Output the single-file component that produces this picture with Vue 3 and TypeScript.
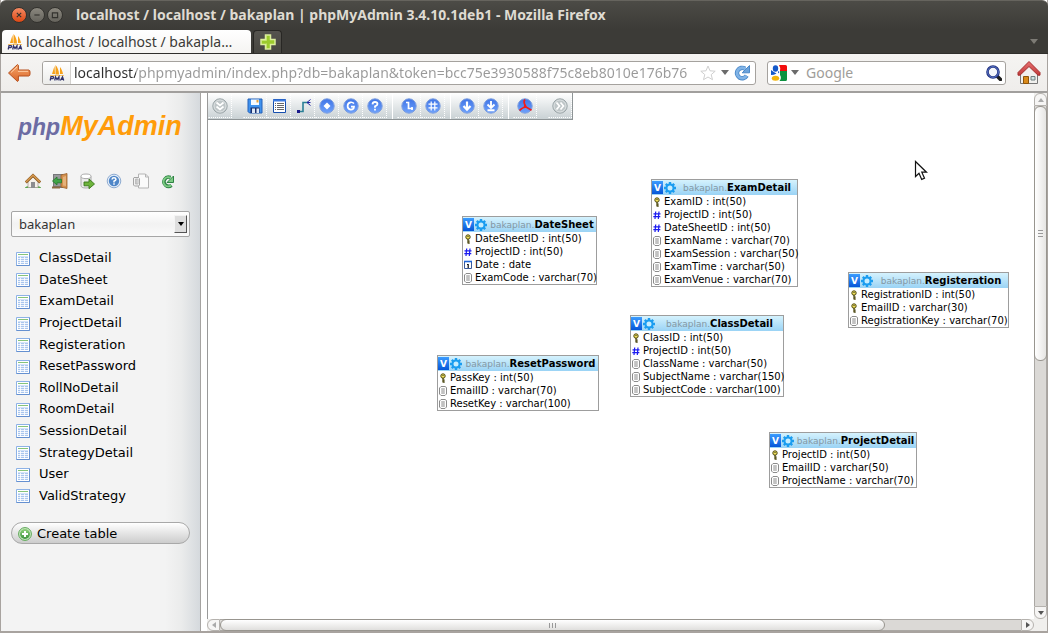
<script setup lang="ts">
import { ref } from 'vue'

type FieldKind = 'key' | 'num' | 'date' | 'text'

interface Field {
  kind: FieldKind
  label: string
}

interface TableNode {
  name: string
  x: number
  y: number
  width: number
  fields: Field[]
}

const f = (kind: FieldKind, label: string): Field => ({ kind, label })

const address = ref('localhost/phpmyadmin/index.php?db=bakaplan&token=bcc75e3930588f75c8eb8010e176b76')
const query = ref('')
const database = ref('bakaplan')

const quickLinks = [
  { icon: 'house', label: 'Home' },
  { icon: 'door', label: 'Log out' },
  { icon: 'sql', label: 'Query window' },
  { icon: 'help', label: 'phpMyAdmin documentation' },
  { icon: 'docs', label: 'Documentation' },
  { icon: 'reload', label: 'Reload navigation frame' },
]

const tables = [
  'ClassDetail', 'DateSheet', 'ExamDetail', 'ProjectDetail', 'Registeration', 'ResetPassword',
  'RollNoDetail', 'RoomDetail', 'SessionDetail', 'StrategyDetail', 'User', 'ValidStrategy',
]

const toolGroups = [
  [{ icon: 't-collapse', label: 'Show/Hide left menu' }],
  [
    { icon: 't-save', label: 'Save position' },
    { icon: 't-list', label: 'Create table' },
    { icon: 't-relation', label: 'Create relation' },
    { icon: 't-display', label: 'Choose column to display' },
    { icon: 't-reload', label: 'Reload' },
    { icon: 't-help', label: 'Help' },
  ],
  [
    { icon: 't-angular', label: 'Angular links' },
    { icon: 't-grid', label: 'Snap to grid' },
  ],
  [
    { icon: 't-small', label: 'Small/Big All' },
    { icon: 't-toggle', label: 'Toggle small/big' },
  ],
  [{ icon: 't-pdf', label: 'Import/Export coordinates for PDF schema' }],
  [{ icon: 't-move', label: 'Move Menu' }],
]

const nodes: TableNode[] = [
  {
    name: 'DateSheet', x: 254, y: 123, width: 135,
    fields: [f('key', 'DateSheetID : int(50)'), f('num', 'ProjectID : int(50)'), f('date', 'Date : date'), f('text', 'ExamCode : varchar(70)')],
  },
  {
    name: 'ExamDetail', x: 443, y: 86, width: 147,
    fields: [
      f('key', 'ExamID : int(50)'), f('num', 'ProjectID : int(50)'), f('num', 'DateSheetID : int(50)'),
      f('text', 'ExamName : varchar(70)'), f('text', 'ExamSession : varchar(50)'),
      f('text', 'ExamTime : varchar(50)'), f('text', 'ExamVenue : varchar(70)'),
    ],
  },
  {
    name: 'Registeration', x: 640, y: 179, width: 161,
    fields: [f('key', 'RegistrationID : int(50)'), f('key', 'EmailID : varchar(30)'), f('text', 'RegistrationKey : varchar(70)')],
  },
  {
    name: 'ClassDetail', x: 422, y: 222, width: 154,
    fields: [
      f('key', 'ClassID : int(50)'), f('num', 'ProjectID : int(50)'), f('text', 'ClassName : varchar(50)'),
      f('text', 'SubjectName : varchar(150)'), f('text', 'SubjectCode : varchar(100)'),
    ],
  },
  {
    name: 'ResetPassword', x: 229, y: 262, width: 162,
    fields: [f('key', 'PassKey : int(50)'), f('text', 'EmailID : varchar(70)'), f('text', 'ResetKey : varchar(100)')],
  },
  {
    name: 'ProjectDetail', x: 561, y: 339, width: 148,
    fields: [f('key', 'ProjectID : int(50)'), f('text', 'EmailID : varchar(50)'), f('text', 'ProjectName : varchar(70)')],
  },
]
</script>

<template>
  <svg class="sprite" aria-hidden="true">
    <defs>
      <linearGradient id="g-blue" x1="0" y1="0" x2="0" y2="1">
        <stop offset="0" stop-color="#3f74e6" /><stop offset="1" stop-color="#6fa2fb" />
      </linearGradient>
      <linearGradient id="g-orange" x1="0" y1="0" x2="0" y2="1">
        <stop offset="0" stop-color="#f6a76a" /><stop offset="1" stop-color="#d9652a" />
      </linearGradient>
      <linearGradient id="g-roof" x1="0" y1="0" x2="0" y2="1">
        <stop offset="0" stop-color="#e87070" /><stop offset="1" stop-color="#c03a3a" />
      </linearGradient>
      <linearGradient id="g-green" x1="0" y1="0" x2="0" y2="1">
        <stop offset="0" stop-color="#8fd07a" /><stop offset="1" stop-color="#3f9440" />
      </linearGradient>
    </defs>

    <symbol id="pma" viewBox="0 0 16 16">
      <path d="M5.500 1 3 9h3zM6.500 0v9.500h3.500C10 6 8.500 2 6.500 0zM11 2v7h3C13.500 6 12.500 4 11 2z" fill="#f7a11a" />
      <path d="M1 10.500h14" stroke="#f9c66a" stroke-width="1" />
      <g fill="none" stroke="#33346b" stroke-width="1.300">
        <path d="M1.200 15.500 2 11.600h2.200q1 1-.5 2H1.800" />
        <path d="M5.700 15.500 6.500 11.800 8 14.500 10 11.800 10 15.500" />
        <path d="M11.400 15.500 13.500 11.800 14.700 15.500M12 14.300h2.500" />
      </g>
    </symbol>
    <symbol id="back" viewBox="0 0 24 20">
      <path d="M10.500 1.500 1.500 10l9 8.500.9-.8V13h10.300q1.300-.2 1.300-2V9q0-1.800-1.300-2H11.400V2.300z" fill="url(#g-orange)" stroke="#b6511f" stroke-linejoin="round" />
      <path d="M10 4 4 9.500M11 8.300h10" stroke="#ffd0a8" fill="none" />
    </symbol>
    <symbol id="plus" viewBox="0 0 16 16">
      <path d="M5.500 1h5v4.500H15v5h-4.500V15h-5v-4.500H1v-5h4.500z" fill="#9ccb2d" stroke="#dcee9c" stroke-width="1.500" />
      <path d="M6.500 2v4.500H2M6.500 9.500V14" stroke="#c5e56e" fill="none" />
    </symbol>
    <symbol id="star" viewBox="0 0 16 16">
      <path d="m8 1 2 4.800 5.200.4-4 3.400 1.300 5.100L8 12l-4.500 2.700 1.300-5.100-4-3.400L6 5.800z" fill="#fff" stroke="#cfcfcf" stroke-linejoin="round" />
    </symbol>
    <symbol id="refresh" viewBox="0 0 16 16">
      <path d="M12.700 10.700A5.200 5.200 0 1 1 11 3.700" fill="none" stroke="#4a88c8" stroke-width="4.400" />
      <path d="M15.500 .5v7.300H8.200z" fill="#6ba3dc" stroke="#4a88c8" />
      <path d="M12.500 10.800A5.200 5.200 0 1 1 11.500 4" fill="none" stroke="#80b3e6" stroke-width="2.800" />
    </symbol>
    <symbol id="google" viewBox="0 0 16 16">
      <path d="M8 0h6.500Q16 0 16 1.500V6H9q1-3-1-6z" fill="#f20d0d" />
      <path d="M9 6h7v8.500q0 1.500-1.500 1.500H8.500q2.500-3 .5-6z" fill="#0d9240" />
      <ellipse cx="4.500" cy="3.500" rx="2.700" ry="3.300" fill="#1559c9" />
      <path d="M0 5q3 2 5.500 3.500Q3 10 0 10zM7 6l1.500 1L7 8.500z" fill="#1559c9" />
      <ellipse cx="4.500" cy="13.300" rx="3.700" ry="2.500" fill="#f3b50c" />
    </symbol>
    <symbol id="lens" viewBox="0 0 16 16">
      <path d="m11 11 3.500 3.500" stroke="#1c1c1c" stroke-width="3.600" stroke-linecap="round" />
      <circle cx="7" cy="7" r="5.500" fill="#f4f6fb" stroke="#1f2f7d" stroke-width="2.600" />
      <circle cx="7" cy="7" r="5.400" fill="none" stroke="#5a76c8" stroke-width="1" />
    </symbol>
    <symbol id="home" viewBox="0 0 24 24">
      <path d="M3.500 11 12 3l8.500 8v11.500h-17z" fill="#f1f0ee" stroke="#777" />
      <path d="m1 11.500 11-11 11 11v2.700h-2L12 5.500 3 14.200H1z" fill="url(#g-roof)" stroke="#a52f2f" stroke-linejoin="round" />
      <path d="M6.500 15.500h5v7h-5z" fill="#d98a1a" stroke="#8e5409" />
      <path d="M14 15.500h4V19h-4z" fill="#cfe3e3" stroke="#6f7f7f" />
    </symbol>
    <symbol id="house" viewBox="0 0 16 16">
      <path d="M0 14.500q2-2 4-1.500h8q2-.5 4 1.500v.5H0z" fill="#58a84a" />
      <path d="M3 8 8 3.500 13 8v6.500H3z" fill="#f5f1ea" stroke="#a8a098" stroke-width=".8" />
      <path d="M.8 9.500 8 2.500l7.200 7" fill="none" stroke="#8d5a20" stroke-width="2.800" />
      <path d="M1 9 8 2.300 15 9" fill="none" stroke="#d79a50" stroke-width="1.500" />
      <path d="M6 9h4v6H6z" fill="#8c8c90" />
    </symbol>
    <symbol id="door" viewBox="0 0 16 16">
      <path d="M1 1h10v14H1z" fill="#77777a" /><path d="M2 2h8v11H2z" fill="#99999c" />
      <path d="m9 2 6-1.500v15L9 14z" fill="#d3904e" stroke="#9a6028" stroke-width=".8" />
      <path d="m11 4 3-1v10l-3-.5z" fill="#e6b27a" />
      <path d="M.5 8 5 4v2.300h4.500v3.500H5V12z" fill="#41a447" stroke="#237a2c" stroke-width=".8" />
      <path d="M0 13.500h8v2H0z" fill="#8b6a42" />
    </symbol>
    <symbol id="sql" viewBox="0 0 16 16">
      <path d="M2 3.500v9q0 2.500 5 2.500t5-2.500v-9z" fill="#ececec" stroke="#a3a3a3" stroke-width=".9" />
      <ellipse cx="7" cy="3.300" rx="5" ry="2.300" fill="#fff" stroke="#a3a3a3" stroke-width=".9" />
      <path d="M5 9h5V6l5.500 5L10 15.700v-2.900H5z" fill="#6db33b" stroke="#38771a" stroke-width=".9" />
    </symbol>
    <symbol id="help" viewBox="0 0 16 16">
      <circle cx="8" cy="8" r="6.800" fill="#e4edf8" stroke="#8eabd0" />
      <circle cx="8" cy="8" r="5.200" fill="#4e86c8" />
      <path d="M6 6.500Q6.200 4.700 8 4.700t2 1.600Q10 7.300 8 8.200V9.400M8 10.300v1.500" fill="none" stroke="#fff" stroke-width="1.500" />
    </symbol>
    <symbol id="docs" viewBox="0 0 16 16">
      <path d="M5.500 1h7l3 3v11h-10z" fill="#fafafa" stroke="#b4b4b4" /><path d="M12.500 1v3h3" fill="none" stroke="#b4b4b4" />
      <path d="M1 4.500h4.500l1 1V12l-1 1H1.500L.5 12V5z" fill="#f2f2f2" stroke="#a5a5a5" />
      <path d="M2.500 6h2.500v5H2.500zM3.700 6v5" fill="none" stroke="#b0b0b0" stroke-width=".8" />
    </symbol>
    <symbol id="reload" viewBox="0 0 16 16">
      <path d="M11.500 12.300A4.600 4.600 0 1 1 10.500 4.500" fill="none" stroke="#2f8244" stroke-width="3.600" />
      <path d="M13.500 3v6.500H7z" fill="#7ccb83" stroke="#2f8244" />
      <path d="M11.200 12.200A4.600 4.600 0 1 1 10.800 5" fill="none" stroke="#7ccb83" stroke-width="1.900" />
    </symbol>
    <symbol id="table" viewBox="0 0 14 14">
      <path d="M.5 .5h13v13H.5z" fill="#fff" stroke="#8db2e6" />
      <path d="M.5 13.500h13V.5" fill="none" stroke="#6590d0" />
      <path d="M2 2.500h10" stroke="#86c47a" />
      <path d="M2 4.500h10v7.500H2z" fill="#a9c6ee" />
      <path d="M4.500 5v7M8.500 5v7M2 6.500h10M2 8.500h10M2 10.500h10" stroke="#fff" stroke-width=".8" />
    </symbol>
    <symbol id="create" viewBox="0 0 14 14">
      <circle cx="7" cy="7" r="6.400" fill="#cdeac6" stroke="#5aa653" />
      <circle cx="7" cy="7" r="5" fill="url(#g-green)" />
      <path d="M7 4v6M4 7h6" stroke="#fff" stroke-width="2" />
    </symbol>

    <symbol id="disc" viewBox="0 0 16 16">
      <circle cx="8" cy="8" r="7.200" fill="url(#g-blue)" stroke="#7d9ede" />
    </symbol>
    <symbol id="gray-disc" viewBox="0 0 16 16">
      <circle cx="8" cy="8" r="7.200" fill="#bfc6c8" stroke="#9ba5a8" /><circle cx="8" cy="8" r="6" fill="none" stroke="#dde2e3" />
    </symbol>
    <symbol id="t-collapse" viewBox="0 0 16 16">
      <use href="#gray-disc" /><path d="m4.500 4.500 3.500 3 3.500-3M4.500 8.500l3.500 3 3.500-3" fill="none" stroke="#fff" stroke-width="1.700" />
    </symbol>
    <symbol id="t-move" viewBox="0 0 16 16">
      <use href="#gray-disc" /><path d="m4.500 4.500 3 3.500-3 3.500M8.500 4.500l3 3.500-3 3.500" fill="none" stroke="#fff" stroke-width="1.700" />
    </symbol>
    <symbol id="t-save" viewBox="0 0 16 16">
      <path d="M1 1h14v14H2.500L1 13.500z" fill="#3f92ee" stroke="#2560b8" />
      <path d="M4 1.500h8V7H4z" fill="#f5f9ff" /><path d="M9.500 2h2v2.500h-2z" fill="#e8a33a" />
      <path d="M3.500 9.500h9V15h-9z" fill="#1a2f6c" /><path d="M5 10.500h3V15H5zM9.500 10.500H12V15H9.500z" fill="#dfe9f6" />
    </symbol>
    <symbol id="t-list" viewBox="0 0 16 16">
      <path d="M2.500 1.500h12v13h-12z" fill="#fff" stroke="#164fae" /><path d="M2 2.500h13" stroke="#3d7be0" stroke-width="2" />
      <path d="M6 5.500h7M6 7.500h7M6 9.500h7M6 11.500h7M4 5.500h1M4 7.500h1M4 9.500h1M4 11.500h1" stroke="#555" stroke-width=".9" />
    </symbol>
    <symbol id="t-relation" viewBox="0 0 16 16">
      <path d="M3 13.500h5v-9h5" fill="none" stroke="#2a7f96" stroke-width="1.600" />
      <path d="M2 12h3v3H2z" fill="#1a1a8a" /><path d="M15.500 1.500 12 4.500l3.500 3M12 4.500h3.500" fill="none" stroke="#2020a0" />
    </symbol>
    <symbol id="t-display" viewBox="0 0 16 16"><use href="#disc" /><path d="m8 4.500 3.500 3.500L8 11.500 4.500 8z" fill="#fff" /></symbol>
    <symbol id="t-reload" viewBox="0 0 16 16">
      <use href="#disc" /><path d="M11 5.500Q9.500 4 7.500 4.300 4.600 5 4.600 8t3 3.600q3.200.2 3.400-3H8" fill="none" stroke="#fff" stroke-width="1.700" />
    </symbol>
    <symbol id="t-help" viewBox="0 0 16 16">
      <use href="#disc" /><path d="M5.500 6.300Q5.700 4 8 4t2.500 2Q10.500 7.300 8 8.300V9.800M8 10.800v1.700" fill="none" stroke="#fff" stroke-width="1.800" />
    </symbol>
    <symbol id="t-angular" viewBox="0 0 16 16"><use href="#disc" /><path d="M5 4.500h2.500v6H12M11 9v3" fill="none" stroke="#fff" stroke-width="1.700" /></symbol>
    <symbol id="t-grid" viewBox="0 0 16 16"><use href="#disc" /><path d="M6.200 3.500v9M9.800 3.500v9M3.500 6.200h9M3.500 9.800h9" stroke="#fff" stroke-width="1.200" /></symbol>
    <symbol id="t-small" viewBox="0 0 16 16"><use href="#disc" /><path d="M8 3.500v8M4.500 8 8 11.700 11.500 8" fill="none" stroke="#fff" stroke-width="2.200" /></symbol>
    <symbol id="t-toggle" viewBox="0 0 16 16">
      <use href="#disc" /><path d="M8 3v7M4.500 6.500 8 10l3.500-3.500M4.500 12.300h7" fill="none" stroke="#fff" stroke-width="1.900" />
    </symbol>
    <symbol id="t-pdf" viewBox="0 0 16 16">
      <use href="#disc" /><path d="M8 1.500Q6.500 3 7.500 6L9 9 14.500 12.300M9 9q-3 0-6.500 3.500M8 6.500 7.500 9.500" fill="none" stroke="#f21b1b" stroke-width="1.700" />
    </symbol>

    <symbol id="gear" viewBox="0 0 12 12">
      <path d="M6 0v12M0 6h12M1.800 1.800l8.400 8.400M10.200 1.800 1.800 10.200" stroke="#1b9df0" stroke-width="2.400" />
      <circle cx="6" cy="6" r="3.500" fill="#c6edff" stroke="#1b9df0" stroke-width="2" />
    </symbol>
    <symbol id="f-key" viewBox="0 0 10 10">
      <circle cx="5" cy="3" r="2.200" fill="#f2e25a" stroke="#4c4710" /><path d="M5 5v4.500M5 7.200h1.700M5 9h1.700" stroke="#4c4710" stroke-width="1.300" />
      <path d="M4.500 2.500h1" stroke="#222" />
    </symbol>
    <symbol id="f-num" viewBox="0 0 10 10"><path d="M3.700 1.500 3 9M7 1.500 6.300 9M1.500 3.800h7M1.300 6.700h7" stroke="#1c1cf0" stroke-width="1.200" /></symbol>
    <symbol id="f-date" viewBox="0 0 10 10">
      <path d="M1.500 1.500h7v7h-7z" fill="#fff" stroke="#3a5a9a" /><path d="M1 1.500h8" stroke="#1f66d8" stroke-width="1.600" /><path d="M4 4.500h1.200V8" fill="none" stroke="#111" stroke-width="1.200" />
    </symbol>
    <symbol id="f-text" viewBox="0 0 10 10">
      <path d="M3 .5h4l1.500 1V8L7 9.500H3L1.500 8V2z" fill="#fff" stroke="#8c8c8c" /><path d="M3.200 3h3.600M3.200 5h3.600M3.200 7h3.600" stroke="#777" stroke-width=".9" />
    </symbol>
  </svg>

  <div class="window">
    <header class="chrome">
      <div class="titlebar">
        <button class="win close" aria-label="Close"><svg viewBox="0 0 16 16"><path d="m5.500 5.500 5 5M10.500 5.500l-5 5" /></svg></button>
        <button class="win" aria-label="Minimize"><svg viewBox="0 0 16 16"><path d="M5 8h6" /></svg></button>
        <button class="win" aria-label="Maximize"><svg viewBox="0 0 16 16"><path d="M5 5.500h6v5.500H5z" /></svg></button>
        <h1>localhost / localhost / bakaplan | phpMyAdmin 3.4.10.1deb1 - Mozilla Firefox</h1>
      </div>
      <div class="tabs">
        <button class="tab"><svg class="i16"><use href="#pma" /></svg><span>localhost / localhost / bakapla…</span></button>
        <button class="newtab" aria-label="New tab"><svg class="i16"><use href="#plus" /></svg></button>
        <button class="alltabs" aria-label="List all tabs"><i class="caret"></i></button>
      </div>
    </header>

    <nav class="navbar">
      <button class="plain" aria-label="Back"><svg class="back"><use href="#back" /></svg></button>
      <div class="box address">
        <span class="identity"><svg class="i16"><use href="#pma" /></svg></span>
        <input v-model="address" type="text" class="url" aria-label="Address">
        <button class="plain" aria-label="Bookmark"><svg class="i16"><use href="#star" /></svg></button>
        <button class="plain" aria-label="History"><i class="caret"></i></button>
        <button class="plain" aria-label="Reload"><svg class="i16"><use href="#refresh" /></svg></button>
      </div>
      <div class="box search">
        <button class="plain engine" aria-label="Search engine"><svg class="i16"><use href="#google" /></svg><i class="caret"></i></button>
        <input v-model="query" type="text" placeholder="Google" aria-label="Search">
        <button class="plain" aria-label="Search"><svg class="i16"><use href="#lens" /></svg></button>
      </div>
      <button class="plain" aria-label="Home page"><svg class="home"><use href="#home" /></svg></button>
    </nav>

    <main class="page">
      <aside class="sidebar">
        <a href="#" class="logo"><span>php</span>MyAdmin</a>
        <div class="quick">
          <a v-for="q in quickLinks" :key="q.icon" href="#" :aria-label="q.label"><svg class="i16"><use :href="'#' + q.icon" /></svg></a>
        </div>
        <div class="picker">
          <select v-model="database" aria-label="Database"><option>bakaplan</option></select>
          <span class="drop" aria-hidden="true"><i></i></span>
        </div>
        <ul class="tables">
          <li v-for="t in tables" :key="t"><a href="#"><svg><use href="#table" /></svg>{{ t }}</a></li>
        </ul>
        <button class="create"><svg><use href="#create" /></svg>Create table</button>
      </aside>

      <section class="designer">
        <div class="canvas">
          <div class="toolbar">
            <div v-for="(g, gi) in toolGroups" :key="gi" class="group">
              <button v-for="t in g" :key="t.icon" :aria-label="t.label"><svg class="i16"><use :href="'#' + t.icon" /></svg></button>
            </div>
          </div>
          <article v-for="n in nodes" :key="n.name" class="node" :style="{ left: n.x + 'px', top: n.y + 'px', width: n.width + 'px' }">
            <h2>
              <button class="toggle" :aria-label="'Collapse ' + n.name">v</button>
              <svg class="gear"><use href="#gear" /></svg>
              <span class="name"><small>bakaplan.</small>{{ n.name }}</span>
            </h2>
            <ul>
              <li v-for="field in n.fields" :key="field.label"><svg><use :href="'#f-' + field.kind" /></svg>{{ field.label }}</li>
            </ul>
          </article>
          <svg class="pointer" viewBox="0 0 14 21"><path d="M1.500 1.500v15l3.500-3.300 2.700 6.200 2.800-1.200-2.700-6h4.700z" fill="#fff" stroke="#111" stroke-width="1.200" /></svg>
        </div>
        <div class="bar vertical">
          <span class="end up"><i class="faint"></i></span>
          <div class="track"><div class="thumb"><b></b></div></div>
          <span class="end down"><i></i></span>
        </div>
        <div class="bar horizontal">
          <span class="end left"><i class="faint"></i></span>
          <div class="track"><div class="thumb"><b></b></div></div>
          <span class="end right"><i></i></span>
        </div>
      </section>
    </main>
  </div>
</template>

<style>
body { margin: 0; background: #fff; }
</style>

<style scoped>
* { box-sizing: border-box; }
button, input, select { font: inherit; color: inherit; margin: 0; padding: 0; border: 0; background: none; }
button { display: flex; align-items: center; flex: none; }
a { color: inherit; text-decoration: none; }
ul { list-style: none; margin: 0; padding: 0; }
svg { display: block; flex: none; }
.sprite { position: absolute; width: 0; height: 0; }
.i16 { width: 16px; height: 16px; }

.window {
  min-height: 100vh;
  display: flex;
  flex-direction: column;
  border: 1px solid #a8a39f;
  border-top: 0;
  border-bottom-width: 2px;
  font-family: "DejaVu Sans", sans-serif;
  background: #fff;
}
.chrome {
  margin: 0 -1px;
  background: linear-gradient(#4c4b46, #3c3b37 28px);
  border-top: 1px solid #66645e;
  border-radius: 6px 6px 0 0;
  border-bottom: 1px solid #302f2c;
  font-family: "Noto Sans", sans-serif;
}
.titlebar { display: flex; align-items: center; height: 27px; padding-left: 11px; gap: 2px; }
.win { width: 16px; height: 16px; border-radius: 50%; background: linear-gradient(#8a877e, #65635c); border: 1px solid #33322e; }
.win svg { width: 14px; height: 14px; fill: none; stroke: #33322e; stroke-width: 1.300; }
.win.close { background: linear-gradient(#f58a63, #dd4814); }
h1 { margin: 0 0 0 11px; color: #dfdbd2; font-size: 14px; line-height: 20px; font-weight: 700; white-space: nowrap; }
.tabs { display: flex; align-items: flex-end; height: 25px; padding: 0 10px 0 2px; gap: 2px; }
.tab {
  width: 249px; height: 23px; padding: 0 5px; gap: 3px;
  background: linear-gradient(#fff, #f5f4f2);
  border-radius: 4px 4px 0 0;
  color: #3c3b37; font-size: 14px; white-space: nowrap;
}
.newtab { width: 29px; height: 23px; justify-content: center; background: linear-gradient(#55534e, #474641); border: 1px solid #282724; border-bottom: 0; border-radius: 4px 4px 0 0; }
.alltabs { margin-left: auto; height: 23px; --caret: #7d7b75; }
.caret { width: 0; height: 0; border: 4px solid transparent; border-top: 5px solid var(--caret, #6b6b6b); border-bottom: 0; }

.navbar {
  display: flex; align-items: center; height: 39px; padding: 0 6px 0 6px; gap: 11px;
  background: linear-gradient(#f5f4f2, #efedeb);
  border-bottom: 2px solid #a19f9d;
  font: 14px/20px "Noto Sans", sans-serif;
}
.back { width: 24px; height: 20px; }
.home { width: 24px; height: 24px; }
.box { display: flex; align-items: center; height: 24px; background: #fff; border: 1px solid #a5a29e; border-radius: 3px; overflow: hidden; }
.address { flex: 1; min-width: 0; gap: 7px; padding-right: 5px; }
.identity { display: grid; place-items: center; align-self: stretch; width: 28px; background: linear-gradient(#fff, #ececea); border-right: 1px solid #d3d1ce; margin-right: -4px; }
.url {
  flex: 1; min-width: 0; height: 22px;
  background: linear-gradient(90deg, #2e2e2e 62px, #999 62px);
  background-clip: text; -webkit-background-clip: text; color: transparent;
}
.address .plain + .plain { margin-left: -2px; }
.search { flex: 0 1 239px; padding: 0 3px; }
.search input { flex: 1; min-width: 0; padding-left: 7px; }
.search input::placeholder { color: #a09d99; opacity: 1; }
.engine { gap: 4px; }

.page { flex: 1; display: flex; gap: 6px; }
.sidebar {
  flex: none; width: 200px; padding: 0 10px;
  background: linear-gradient(90deg, #f3f3f3 164px, #ebecec 180px, #d5d9dd);
  border-right: 1px solid #a5a3a1;
  color: #000; font-size: 13px;
}
.logo { display: block; margin: 17px 0 0 7px; font: italic 700 27px/32px "Liberation Sans", sans-serif; color: #ff9c0a; white-space: nowrap; }
.logo span { color: #6c6ca3; font-size: 23px; }
.quick { display: flex; gap: 11px; margin: 30px 0 0 14px; }
.picker { position: relative; margin-top: 22px; }
.picker select {
  display: block; width: 100%; height: 26px; padding: 0 7px; appearance: none;
  border: 1px solid #a6a6a6; border-radius: 2px;
  background: linear-gradient(#fff, #f2f2f2 50%, #fafafa);
  font: 13px/20px "Noto Sans", sans-serif; color: #333;
}
.drop { position: absolute; right: 3px; top: 4px; width: 13px; height: 18px; display: grid; place-items: center; background: #dedede; border: 1px solid #f4f4f4; border-right-color: #555; border-bottom-color: #555; pointer-events: none; }
.drop i { border: 3px solid transparent; border-top: 4px solid #000; border-bottom: 0; }
.tables { display: grid; grid-auto-rows: 1fr; height: 259px; margin: 10px 0 0 5px; }
.tables a { display: flex; align-items: center; height: 100%; gap: 9px; }
.tables svg { width: 14px; height: 14px; margin-top: 2px; }
.create { width: 100%; height: 22px; margin-top: 16px; padding: 0 6px; gap: 5px; border: 1px solid #a8a8a8; border-radius: 11px; background: linear-gradient(#fff, #ccc); }
.create svg { width: 14px; height: 14px; margin-top: 2px; }

.designer { flex: 1; min-width: 0; display: grid; grid-template: 1fr 12px / 1fr 13px; background: #f0efed; }
.canvas { position: relative; overflow: hidden; background: #fff; border-left: 1px solid #999; }
.toolbar {
  display: flex; width: max-content; height: 27px; background: linear-gradient(#fff, #c9d1d4);
  border-right: 1px solid #8e9496; border-bottom: 1px solid #8e9496;
}
.group { display: flex; padding: 1px 0; }
.group + .group { margin-left: 5px; padding-left: 4px; border-left: 1px solid #fff; }
.group:nth-child(2), .group:last-child { border-left: 2px solid transparent; }
.group button { width: 24px; height: 24px; justify-content: center; border: 1px dotted transparent; border-right-color: #fff; border-bottom-color: #fff; }

.node { position: absolute; background: #fff; border: 1px solid #9d9d9d; color: #000; font-size: 10px; white-space: nowrap; }
.node h2 { display: flex; align-items: center; height: 15px; margin: 0; font-size: 10px; background: linear-gradient(#d5f2fd, #9ad3f5); }
.toggle { width: 11px; height: 13px; justify-content: center; background: linear-gradient(#3b9cff, #0656d8); color: #fff; font-weight: 700; font-size: 9px; text-transform: uppercase; }
.gear { width: 12px; height: 12px; margin-left: 1px; }
.name { flex: 1; display: flex; justify-content: center; align-items: baseline; line-height: 14px; padding-left: 1px; }
.name small { font-size: 9px; font-weight: 400; color: #8497a3; }
.node li { display: flex; align-items: center; height: 13px; gap: 2px; }
.node li svg { width: 10px; height: 10px; }
.pointer { position: absolute; left: 706px; top: 67px; width: 14px; height: 21px; }

.bar { display: flex; }
.track { flex: 1; background: #dbd9d6; border: 0 solid #aaa7a3; }
.thumb { display: grid; place-items: center; border: 1px solid #98958f; border-radius: 6px; }
.end { display: grid; place-items: center; flex: none; background: #f6f5f4; border: 1px solid #b5b2ae; }
.end i { width: 0; height: 0; border: 3px solid transparent; --tip: #555; }
.end .faint { --tip: #aaa; }
.vertical { flex-direction: column; }
.vertical .track { border-width: 0 1px; }
.vertical .thumb { height: 51%; margin: 0 -1px; background: linear-gradient(90deg, #fff, #e6e5e3); }
.vertical .thumb b { width: 5px; height: 7px; background: repeating-linear-gradient(#999 0 1px, transparent 1px 3px); }
.vertical .end { height: 13px; }
.horizontal .track { border-width: 1px 0; }
.horizontal .thumb { width: 83%; height: 12px; margin-top: -1px; background: linear-gradient(#fff, #e0dfdd); }
.horizontal .thumb b { width: 7px; height: 5px; background: repeating-linear-gradient(90deg, #999 0 1px, transparent 1px 3px); }
.horizontal .end { width: 13px; }
.up { border-radius: 6px 6px 0 0; }
.down { border-radius: 0 0 6px 6px; }
.left { border-radius: 6px 0 0 6px; }
.right { border-radius: 0 6px 6px 0; }
.up i { border-bottom: 4px solid var(--tip); border-top: 0; }
.down i { border-top: 4px solid var(--tip); border-bottom: 0; }
.left i { border-right: 4px solid var(--tip); border-left: 0; }
.right i { border-left: 4px solid var(--tip); border-right: 0; }
</style>
